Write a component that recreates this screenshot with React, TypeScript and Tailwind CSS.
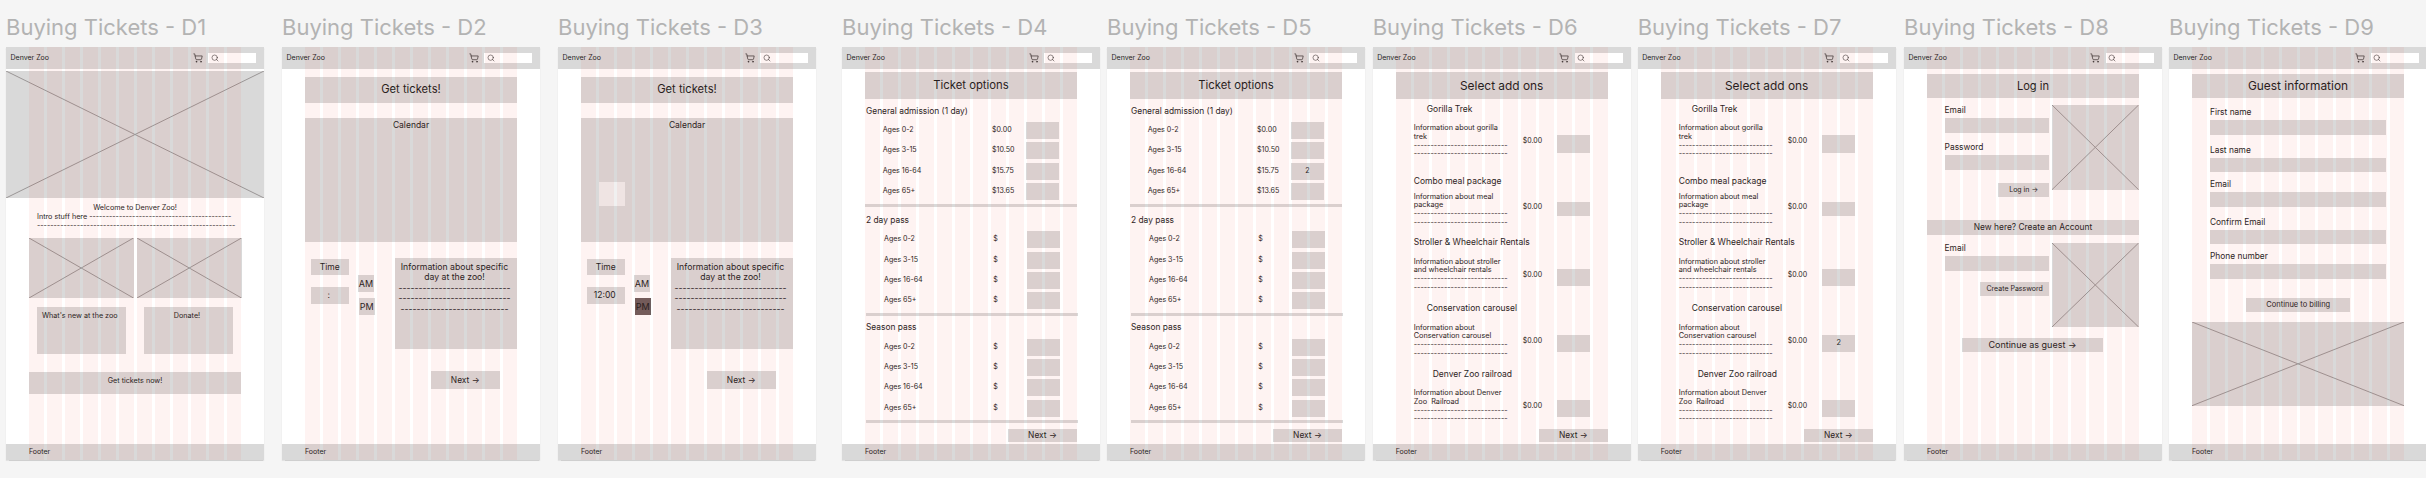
import { Search, ShoppingCart } from "lucide-react";
import type { ReactNode } from "react";

const FRAMES_GRID = Array.from({ length: 12 }, (_, i) => i);

const Dashes = ({ count, className = "" }: { count: number; className?: string }) => (
  <div className={`whitespace-nowrap ${className}`}>{"-".repeat(count)}</div>
);

const Placeholder = ({ className }: { className: string }) => (
  <div className={`bg-[#d9d9d9] ${className}`}>
    <svg viewBox="0 0 100 100" preserveAspectRatio="none" className="block h-full w-full">
      <line x1="0" y1="0" x2="100" y2="100" stroke="#9a9696" strokeWidth="1" vectorEffect="non-scaling-stroke" />
      <line x1="100" y1="0" x2="0" y2="100" stroke="#9a9696" strokeWidth="1" vectorEffect="non-scaling-stroke" />
    </svg>
  </div>
);

const Frame = ({ title, className, children }: { title: string; className: string; children: ReactNode }) => (
  <div className={`w-[258px] shrink-0 ${className}`}>
    <h2 className="mb-[8px] h-[24px] whitespace-nowrap text-[22px] leading-[24px] font-normal text-[#b3b3b3]">{title}</h2>
    <div className="relative flex h-[412.5px] flex-col bg-white shadow-[0_0.5px_1px_#cfcfcf]">
      <header className="flex h-[21.5px] shrink-0 items-center bg-[#d9d9d9] pl-[4.5px] pr-[8px]">
        <span className="text-[7px] text-[#1e1e1e]">Denver Zoo</span>
        <ShoppingCart className="ml-auto h-[10px] w-[10px] text-[#1e1e1e]" strokeWidth={1.5} />
        <div className="ml-[5.5px] flex h-[10px] w-[48px] items-center bg-white pl-[2.5px]">
          <Search className="h-[8px] w-[8px] text-[#1e1e1e]" strokeWidth={1.5} />
        </div>
      </header>
      <main className="flex-1">{children}</main>
      <footer className="flex h-[15.5px] shrink-0 items-center bg-[#d9d9d9] pl-[23px] text-[7px] text-[#1e1e1e]">Footer</footer>
      <div className="pointer-events-none absolute inset-y-0 left-[23px] grid w-[212.5px] grid-cols-12 gap-x-[3px]">
        {FRAMES_GRID.map((col) => (
          <div key={col} className="bg-[rgba(235,40,20,0.055)]" />
        ))}
      </div>
    </div>
  </div>
);

const TitleBlock = ({ className, children }: { className: string; children: string }) => (
  <div className={`ml-[23px] flex w-[212px] items-center justify-center bg-[#d9d9d9] text-[#1e1e1e] ${className}`}>
    {children}
  </div>
);

const NextButton = ({ className, children }: { className: string; children: string }) => (
  <div className={`flex items-center justify-center bg-[#d9d9d9] text-[8.4px] text-[#1e1e1e] ${className}`}>{children}</div>
);

const HomePage = () => (
  <div className="text-[7.2px] leading-[9px] text-[#1e1e1e]">
    <Placeholder className="mt-[2.5px] h-[127px] w-full" />
    <p className="mt-[4.5px] text-center">Welcome to Denver Zoo!</p>
    <div className="ml-[31px] w-[197px] whitespace-nowrap">Intro stuff here {"-".repeat(43)}</div>
    <Dashes count={60} className="ml-[31px]" />
    <div className="mt-[8.5px] ml-[23px] flex gap-[3.5px]">
      <Placeholder className="h-[60px] w-[104.5px]" />
      <Placeholder className="h-[60px] w-[104.5px]" />
    </div>
    <div className="mt-[9px] ml-[31px] flex gap-[18px]">
      <div className="h-[47px] w-[89px] bg-[#d9d9d9] pt-[3.5px] pl-[5px]">What&apos;s new at the zoo</div>
      <div className="h-[47px] w-[89px] bg-[#d9d9d9] pt-[3.5px] pr-[3px] text-center">Donate!</div>
    </div>
    <div className="mt-[18px] ml-[23px] h-[22px] w-[212px] bg-[#d9d9d9] pt-[3.5px] text-center">Get tickets now!</div>
  </div>
);

const CalendarPage = ({ time, picked }: { time: string; picked?: boolean }) => (
  <div className="text-[#1e1e1e]">
    <TitleBlock className="mt-[8px] h-[26.2px] text-[11.2px]">Get tickets!</TitleBlock>
    <div className="relative mt-[15.3px] ml-[23px] h-[124.5px] w-[212px] bg-[#d9d9d9] pt-[2.5px] text-center text-[8.5px] leading-[11px]">
      Calendar
      {picked && <div className="absolute top-[64px] left-[17.7px] h-[24px] w-[26.3px] bg-[#f0f0f0]" />}
    </div>
    <div className="ml-[28.5px] flex items-start text-[8.5px]">
      <div className="w-[38.5px]">
        <div className="mt-[16.2px] flex h-[16.6px] items-center justify-center bg-[#d9d9d9]">Time</div>
        <div className="mt-[12px] flex h-[17px] items-center justify-center pr-[2px] bg-[#d9d9d9]">{time}</div>
      </div>
      <div className="ml-[9px] w-[16.5px] text-[9px]">
        <div className="mt-[32.5px] flex h-[17px] w-[16px] items-center justify-center bg-[#d9d9d9]">AM</div>
        <div className={`mt-[6px] ml-[1px] flex h-[16.7px] w-[15.5px] items-center justify-center ${picked ? "bg-[#6d5f5f]" : "bg-[#d9d9d9]"}`}>PM</div>
      </div>
      <div className="mt-[15.5px] ml-[20.5px] flex h-[91.3px] w-[122px] flex-col items-center bg-[#d9d9d9] pt-[3.7px] pr-[3px] text-[8.7px] leading-[10.5px]">
        <p className="whitespace-nowrap">Information about specific</p>
        <p className="whitespace-nowrap">day at the zoo!</p>
        <Dashes count={28} />
        <Dashes count={28} />
        <Dashes count={27} />
      </div>
    </div>
    <NextButton className="mt-[21.7px] ml-[149px] h-[17.7px] w-[68.5px]">Next →</NextButton>
  </div>
);

type TicketSection = {
  name: string;
  prices: string[];
  titleClass: string;
  rowsClass: string;
  dividerClass: string;
  quantity?: string;
};

const TICKET_AGES = ["Ages 0-2", "Ages 3-15", "Ages 16-64", "Ages 65+"];

const TicketsPage = ({ sections }: { sections: TicketSection[] }) => (
  <div className="text-[#1e1e1e]">
    <TitleBlock className="mt-[3.8px] h-[26.7px] text-[11.3px]">Ticket options</TitleBlock>
    {sections.map((section) => (
      <section key={section.name}>
        <h3 className={`ml-[24px] h-[12px] text-[8.4px] leading-[12px] font-normal ${section.titleClass}`}>{section.name}</h3>
        <div className={`flex flex-col gap-[3.3px] ${section.rowsClass}`}>
          {TICKET_AGES.map((age, i) => (
            <div key={age} className="flex h-[17px] items-center text-[7.1px]">
              <span className="w-[109.3px]">{age}</span>
              <span className="w-[34px]">{section.prices[i]}</span>
              <span className="flex h-[17px] w-[33px] items-center justify-center bg-[#d9d9d9]">
                {i === 2 ? section.quantity : null}
              </span>
            </div>
          ))}
        </div>
        <div className={`h-[2.4px] w-[212px] bg-[#d9d9d9] ${section.dividerClass}`} />
      </section>
    ))}
    <NextButton className="mt-[6px] ml-[166px] h-[13.3px] w-[69px]">Next →</NextButton>
  </div>
);

const ticketSections = (quantity?: string): TicketSection[] => [
  {
    name: "General admission (1 day)",
    prices: ["$0.00", "$10.50", "$15.75", "$13.65"],
    titleClass: "mt-[6px]",
    rowsClass: "mt-[5px] ml-[40.7px]",
    dividerClass: "mt-[4.4px] ml-[23px]",
    quantity,
  },
  {
    name: "2 day pass",
    prices: ["$", "$", "$", "$"],
    titleClass: "mt-[7.3px]",
    rowsClass: "mt-[5.3px] ml-[42px]",
    dividerClass: "mt-[4.1px] ml-[24px]",
  },
  {
    name: "Season pass",
    prices: ["$", "$", "$", "$"],
    titleClass: "mt-[5.3px]",
    rowsClass: "mt-[5.7px] ml-[42px]",
    dividerClass: "mt-[3.7px] ml-[24px]",
  },
];

type AddOn = {
  title: string;
  info: [string, string];
  titleClass: string;
  rowClass: string;
  priceClass: string;
  boxClass: string;
  quantity?: string;
};

const addOns = (quantity?: string): AddOn[] => [
  {
    title: "Gorilla Trek",
    info: ["Information about gorilla", "trek"],
    titleClass: "mt-[4px] ml-[54px]",
    rowClass: "mt-[9.3px]",
    priceClass: "mt-[11.2px]",
    boxClass: "mt-[11px] h-[17.4px]",
  },
  {
    title: "Combo meal package",
    info: ["Information about meal", "package"],
    titleClass: "mt-[16.1px] ml-[41px]",
    rowClass: "mt-[5.7px]",
    priceClass: "mt-[8.6px]",
    boxClass: "mt-[9px] h-[14px]",
  },
  {
    title: "Stroller & Wheelchair Rentals",
    info: ["Information about stroller", "and wheelchair rentals"],
    titleClass: "mt-[8.7px] ml-[41px]",
    rowClass: "mt-[9.7px]",
    priceClass: "mt-[11.3px]",
    boxClass: "mt-[11.3px] h-[17px]",
  },
  {
    title: "Conservation carousel",
    info: ["Information about", "Conservation carousel"],
    titleClass: "mt-[9.7px] ml-[54px]",
    rowClass: "mt-[9.7px]",
    priceClass: "mt-[11px]",
    boxClass: "mt-[11px] h-[17px]",
    quantity,
  },
  {
    title: "Denver Zoo railroad",
    info: ["Information about Denver", "Zoo  Railroad"],
    titleClass: "mt-[9.7px] ml-[60px]",
    rowClass: "mt-[9.4px]",
    priceClass: "mt-[11px]",
    boxClass: "mt-[11px] h-[17px]",
  },
];

const AddOnsPage = ({ quantity }: { quantity?: string }) => (
  <div className="text-[#1e1e1e]">
    <TitleBlock className="mt-[3.8px] h-[26.7px] text-[11.9px]">Select add ons</TitleBlock>
    {addOns(quantity).map((item) => (
      <section key={item.title}>
        <h3 className={`h-[12px] text-[8.5px] leading-[12px] font-normal ${item.titleClass}`}>{item.title}</h3>
        <div className={`ml-[41px] flex items-start text-[7.3px] leading-[8.65px] ${item.rowClass}`}>
          <div className="w-[92px]">
            <p className="whitespace-pre">{item.info[0]}</p>
            <p className="whitespace-pre">{item.info[1]}</p>
            <Dashes count={28} />
            <Dashes count={28} />
          </div>
          <span className={`ml-[17px] w-[34.6px] text-[7px] leading-[12px] ${item.priceClass}`}>$0.00</span>
          <div className={`flex w-[33px] items-center justify-center bg-[#d9d9d9] ${item.boxClass}`}>{item.quantity}</div>
        </div>
      </section>
    ))}
    <NextButton className="mt-[4.7px] ml-[166.4px] h-[13.3px] w-[68.6px]">Next →</NextButton>
  </div>
);

const Field = ({ label, className, inputClass }: { label: string; className: string; inputClass: string }) => (
  <>
    <div className={`h-[12px] text-[8.4px] leading-[12px] ${className}`}>{label}</div>
    <div className={`bg-[#d9d9d9] ${inputClass}`} />
  </>
);

const LoginPage = () => (
  <div className="text-[#1e1e1e]">
    <TitleBlock className="mt-[5.5px] h-[23.7px] text-[11.1px]">Log in</TitleBlock>
    <div className="ml-[23px] flex w-[212px] items-start">
      <div className="ml-[17.6px] w-[104.8px]">
        <Field label="Email" className="mt-[6px]" inputClass="mt-[2px] h-[15px]" />
        <Field label="Password" className="mt-[8.6px]" inputClass="mt-[1.7px] h-[15px]" />
        <div className="mt-[13px] ml-[53.4px] flex h-[14.3px] w-[51.4px] items-center justify-center bg-[#d9d9d9] text-[7px]">Log in →</div>
      </div>
      <Placeholder className="mt-[7.6px] ml-[3px] h-[84.7px] w-[86.6px]" />
    </div>
    <div className="mt-[22.7px] ml-[23px] flex h-[15px] w-[212px] items-center justify-center bg-[#d9d9d9] text-[8.4px]">New here? Create an Account</div>
    <div className="ml-[23px] flex w-[212px] items-start">
      <div className="ml-[17.6px] w-[104.8px]">
        <Field label="Email" className="mt-[7px]" inputClass="mt-[2px] h-[14.7px]" />
        <div className="mt-[11.3px] ml-[35.4px] flex h-[13.7px] w-[69.4px] items-center justify-center bg-[#d9d9d9] text-[7px]">Create Password</div>
      </div>
      <Placeholder className="mt-[7.7px] ml-[3px] h-[84px] w-[86.6px]" />
    </div>
    <div className="mt-[11px] ml-[58px] flex h-[14.6px] w-[141px] items-center justify-center bg-[#d9d9d9] text-[9px]">Continue as guest →</div>
  </div>
);

const GuestPage = () => (
  <div className="text-[#1e1e1e]">
    <TitleBlock className="mt-[5.8px] h-[24px] text-[11.9px]">Guest information</TitleBlock>
    <div className="ml-[41px] w-[176px]">
      <Field label="First name" className="mt-[7.7px]" inputClass="mt-[2px] h-[14.7px]" />
      <Field label="Last name" className="mt-[9.3px]" inputClass="mt-[1.7px] h-[14.6px]" />
      <Field label="Email" className="mt-[5.7px]" inputClass="mt-[2px] h-[14.7px]" />
      <Field label="Confirm Email" className="mt-[9px]" inputClass="mt-[2px] h-[14.6px]" />
      <Field label="Phone number" className="mt-[5.7px]" inputClass="mt-[2px] h-[14.7px]" />
    </div>
    <div className="mt-[19px] ml-[77px] flex h-[14px] w-[104.5px] items-center justify-center bg-[#d9d9d9] text-[7.5px]">Continue to billing</div>
    <Placeholder className="mt-[10.3px] ml-[23px] h-[83.7px] w-[212px]" />
  </div>
);

export default function App() {
  return (
    <div className="flex h-[478px] w-[2426px] items-start overflow-hidden bg-[#f5f5f5] pt-[15px] pl-[6px] font-['Inter',sans-serif]">
      <Frame title="Buying Tickets - D1" className=""><HomePage /></Frame>
      <Frame title="Buying Tickets - D2" className="ml-[18px]"><CalendarPage time=":" /></Frame>
      <Frame title="Buying Tickets - D3" className="ml-[18px]"><CalendarPage time="12:00" picked /></Frame>
      <Frame title="Buying Tickets - D4" className="ml-[26px]"><TicketsPage sections={ticketSections()} /></Frame>
      <Frame title="Buying Tickets - D5" className="ml-[7px]"><TicketsPage sections={ticketSections("2")} /></Frame>
      <Frame title="Buying Tickets - D6" className="ml-[7.7px]"><AddOnsPage /></Frame>
      <Frame title="Buying Tickets - D7" className="ml-[7px]"><AddOnsPage quantity="2" /></Frame>
      <Frame title="Buying Tickets - D8" className="ml-[8.3px]"><LoginPage /></Frame>
      <Frame title="Buying Tickets - D9" className="ml-[7px]"><GuestPage /></Frame>
    </div>
  );
}
